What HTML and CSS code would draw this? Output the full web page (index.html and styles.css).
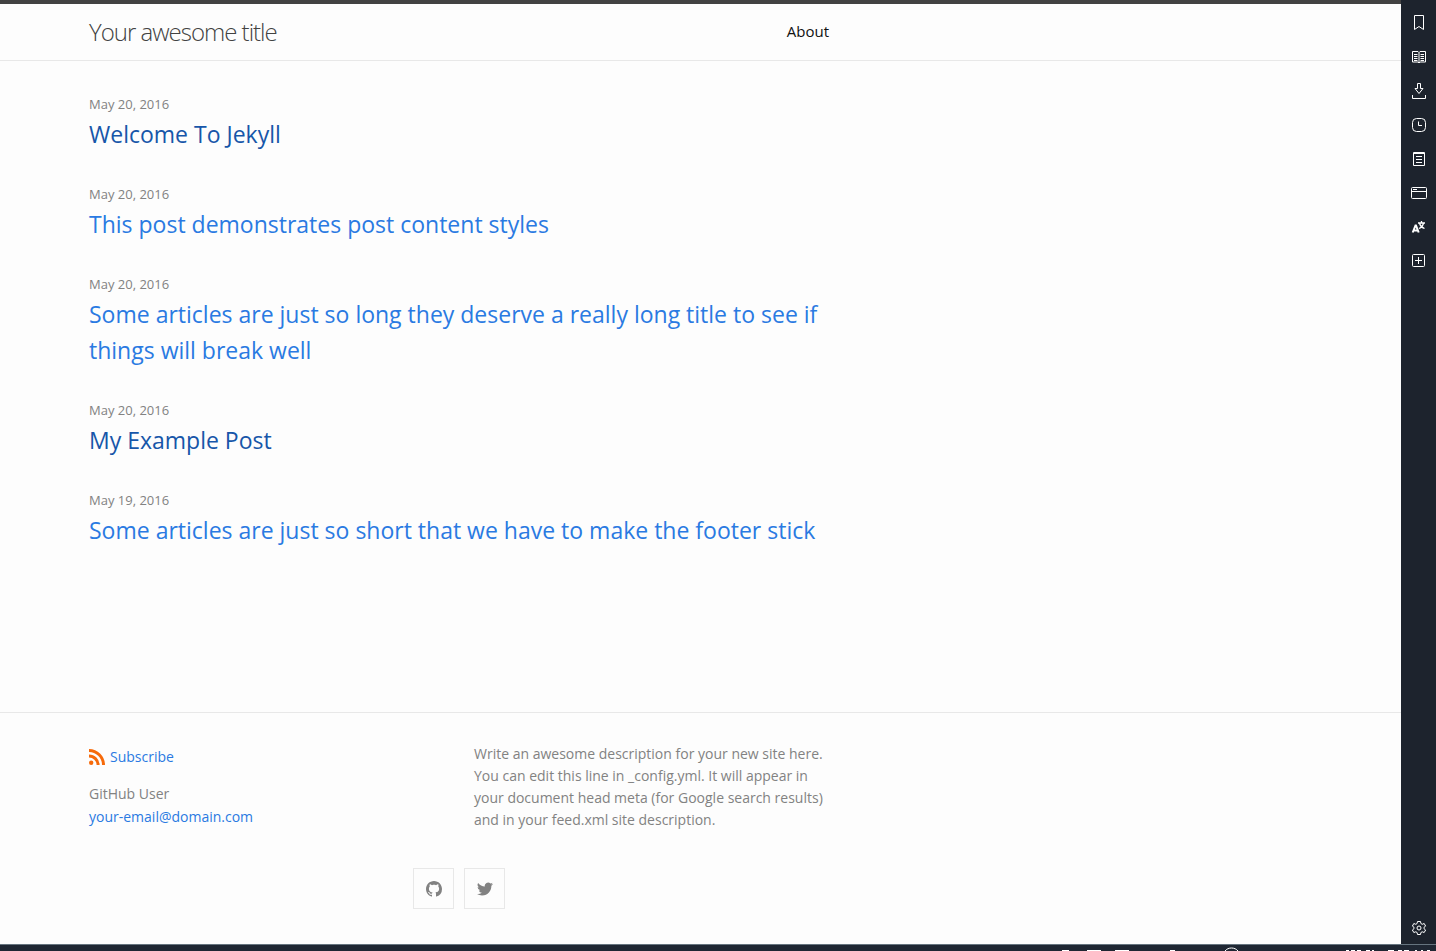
FILE: index.html
```html
<!DOCTYPE html>
<html lang="en">
<head>
<meta charset="utf-8">
<meta name="viewport" content="width=device-width, initial-scale=1">
<title>Your awesome title</title>
<link rel="stylesheet" href="styles.css">
</head>
<body>
<div class="browser">
  <div class="page">
    <header class="site-header">
      <div class="wrapper header-row">
        <a class="site-title" href="#">Your awesome title</a>
        <nav class="site-nav"><a class="page-link" href="#">About</a></nav>
      </div>
    </header>
    <main class="wrapper content">
      <ul class="post-list">
        <li><time class="post-meta">May 20, 2016</time><h2><a class="post-link visited" href="#">Welcome To Jekyll</a></h2></li>
        <li><time class="post-meta">May 20, 2016</time><h2><a class="post-link" href="#">This post demonstrates post content styles</a></h2></li>
        <li><time class="post-meta">May 20, 2016</time><h2><a class="post-link" href="#">Some articles are just so long they deserve a really long title to see if things will break well</a></h2></li>
        <li><time class="post-meta">May 20, 2016</time><h2><a class="post-link visited" href="#">My Example Post</a></h2></li>
        <li><time class="post-meta">May 19, 2016</time><h2><a class="post-link" href="#">Some articles are just so short that we have to make the footer stick</a></h2></li>
      </ul>
    </main>
    <footer class="site-footer">
      <div class="wrapper">
        <div class="footer-columns">
          <div class="contact">
            <a class="feed" href="#">
              <svg class="rss" viewBox="0 0 8 8" aria-hidden="true"><circle cx="1.1" cy="6.9" r="1.1"/><path d="M0 0v1.5A6.5 6.5 0 0 1 6.5 8H8A8 8 0 0 0 0 0zM0 2.7v1.5A3.8 3.8 0 0 1 3.8 8h1.5A5.3 5.3 0 0 0 0 2.7z"/></svg>
              <span>Subscribe</span>
            </a>
            <p class="author">GitHub User</p>
            <a class="email" href="#">your-email@domain.com</a>
          </div>
          <p class="description">Write an awesome description for your new site here. You can edit this line in _config.yml. It will appear in your document head meta (for Google search results) and in your feed.xml site description.</p>
        </div>
        <div class="social">
          <a class="social-link" href="#" aria-label="GitHub"><svg viewBox="0 0 16 16"><path d="M8 0C3.58 0 0 3.58 0 8c0 3.54 2.29 6.53 5.47 7.59.4.07.55-.17.55-.38 0-.19-.01-.82-.01-1.49-2.01.37-2.53-.49-2.69-.94-.09-.23-.48-.94-.82-1.13-.28-.15-.68-.52-.01-.53.63-.01 1.08.58 1.23.82.72 1.21 1.87.87 2.33.66.07-.52.28-.87.51-1.07-1.78-.2-3.64-.89-3.64-3.95 0-.87.31-1.59.82-2.15-.08-.2-.36-1.02.08-2.12 0 0 .67-.21 2.2.82.64-.18 1.32-.27 2-.27s1.36.09 2 .27c1.53-1.04 2.2-.82 2.2-.82.44 1.1.16 1.92.08 2.12.51.56.82 1.27.82 2.15 0 3.07-1.87 3.75-3.65 3.95.29.25.54.73.54 1.48 0 1.07-.01 1.93-.01 2.2 0 .21.15.46.55.38A8.01 8.01 0 0 0 16 8c0-4.42-3.58-8-8-8z"/></svg></a>
          <a class="social-link" href="#" aria-label="Twitter"><svg viewBox="0 0 24 24"><path d="M24 4.6a10 10 0 0 1-2.8.8 5 5 0 0 0 2.1-2.7 9.9 9.9 0 0 1-3.1 1.2 4.9 4.9 0 0 0-8.4 4.5A14 14 0 0 1 1.7 3.1a4.9 4.9 0 0 0 1.5 6.6 4.9 4.9 0 0 1-2.2-.6v.1a4.9 4.9 0 0 0 3.9 4.8 5 5 0 0 1-2.2.1 4.9 4.9 0 0 0 4.6 3.4A9.9 9.9 0 0 1 0 19.5 14 14 0 0 0 7.5 21.7c9.1 0 14-7.5 14-14v-.6A10 10 0 0 0 24 4.6z"/></svg></a>
        </div>
      </div>
    </footer>
  </div>
  <aside class="rail">
    <button aria-label="Bookmarks"><svg viewBox="0 0 16 16"><path d="M3.5.5h9v14L8 11.500l-4.500 3z"/></svg></button>
    <button aria-label="Reading list"><svg viewBox="0 0 16 16"><path d="M1.500 2.500H7l1 1 1-1h5.500V13H9l-1 1-1-1H1.500zM8 3.500V14M3 5.500h3.500M3 7.500h3.500M3 9.500h3.500M3 11.500h3.500M9.500 5.500H13M9.500 7.500H13M9.500 9.500H13M9.500 11.500H13"/></svg></button>
    <button aria-label="Downloads"><svg viewBox="0 0 16 16"><path d="M6.500.500h3v5H12L8 10.500 4 5.500h2.500zM1.500 12v3.500h13V12"/></svg></button>
    <button aria-label="History"><svg viewBox="0 0 16 16"><rect x="1.500" y="1.500" width="13" height="13" rx="4"/><path d="M7.500 4.500v4H11"/></svg></button>
    <button aria-label="Notes"><svg viewBox="0 0 16 16"><path d="M2.500 1.500h11v13h-11zM2.500 2.500h11M5 5.500h6M5 8.500h6M5 11.500h6"/></svg></button>
    <button aria-label="Window"><svg viewBox="0 0 16 16"><rect x=".5" y="2.500" width="15" height="11" rx="1"/><path d="M1 6.500h14M2 4.500h4"/></svg></button>
    <button aria-label="Translate"><svg viewBox="0 0 16 16"><path class="thick" d="M1.700 13.500 4.500 6.500h.5L7.700 13.500M3 11.500h4"/><path class="medium" d="M7 4h7M10.500 2v2M8 9.500c2.500-1 4-3 4.500-5.500M8.500 4c.5 2.500 2.500 4.500 5 5.500"/></svg></button>
    <button aria-label="Add panel"><svg viewBox="0 0 16 16"><rect x="1.500" y="1.500" width="12" height="12" rx="1"/><path d="M7.500 4v7M4 7.500h7"/></svg></button>
    <button class="settings" aria-label="Settings"><svg viewBox="0 0 16 16"><path d="M6.500 1.500h3l.4 2 1.300.8 2-.8 1.400 2.600L13 7.300v1.400l1.600 1.300-1.400 2.500-2-.7-1.300.7-.4 2h-3l-.4-2-1.300-.7-2 .7L1.400 10 3 8.700V7.300L1.400 6.100l1.400-2.600 2 .8 1.300-.8z"/><circle cx="8" cy="8" r="2"/></svg></button>
  </aside>
</div>
<div class="status-bar" aria-hidden="true">
  <svg class="status-icons" viewBox="0 0 406 6"><path d="M32 5.500h7M57 5.500h14M85 5.500h14M140 5.500h5M195 6c3-4 10-4 13 0M316 5.500h3M321 5.500h4M327 5.500h4M336 5.500h4M342 5.500h2M358 5.500h6M368 5.500h4M374 5.500h5M385 5.500h2M391 5.500h2M397 5.500h3"/></svg>
</div>
</body>
</html>
```

FILE: styles.css
```css
* { box-sizing: border-box; margin: 0; padding: 0; }
body {
  display: flex;
  flex-direction: column;
  min-height: 100vh;
  background: #fdfdfd;
  color: #111;
  font-family: "Open Sans", "Noto Sans", sans-serif;
  font-size: 15px;
}
a { color: #2a7ae2; text-decoration: none; }
.browser { display: flex; flex: 1; }
.page { display: flex; flex: 1; flex-direction: column; border-top: 4px solid #424242; }
.wrapper { width: 100%; max-width: 800px; margin-left: 59px; padding: 0 30px; }
.site-header { border-bottom: 1px solid #e8e8e8; }
.header-row { display: flex; align-items: center; justify-content: space-between; height: 56px; padding-bottom: 2px; }
.site-title { color: #424242; font-size: 24px; font-weight: 300; letter-spacing: -1px; }
.page-link { color: #111; }
.content { flex: 1; padding-top: 31px; }
.post-list { display: flex; flex-direction: column; gap: 30px; list-style: none; }
.post-meta { display: block; color: #828282; font-size: 13px; line-height: 24px; }
.post-list h2 { font-size: 23px; font-weight: 400; line-height: 36px; }
.post-link.visited { color: #1756a9; }
.site-footer { padding: 30px 0 35px; border-top: 1px solid #e8e8e8; color: #828282; font-size: 14px; }
.footer-columns { display: grid; grid-template-columns: 385px 1fr; }
.contact { line-height: 23px; }
.description { line-height: 22px; }
.feed { display: flex; align-items: center; gap: 5px; margin: 2px 0 14px; }
.rss { width: 16px; height: 16px; fill: #f66a0a; }
.social { display: flex; justify-content: center; gap: 10px; margin-top: 37px; }
.social-link { display: flex; align-items: center; justify-content: center; width: 41px; height: 41px; border: 1px solid #e8e8e8; }
.social-link svg { width: 16px; height: 16px; fill: #828282; }
.rail { display: flex; flex-direction: column; align-items: center; width: 35px; padding-top: 6px; background: #1d232d; }
.rail button { width: 34px; height: 34px; border: 0; background: none; }
.rail svg { display: block; width: 16px; height: 16px; margin: auto; fill: none; stroke: #fff; stroke-width: 1; }
.rail .thick { stroke-width: 2; }
.rail .medium { stroke-width: 1.3; }
.rail .settings { height: 32px; margin-top: auto; }
.status-bar { display: flex; justify-content: flex-end; height: 7px; border-top: 1px solid #66747f; background: #1f2733; }
.status-icons { width: 406px; height: 6px; fill: none; stroke: #fff; }
```
